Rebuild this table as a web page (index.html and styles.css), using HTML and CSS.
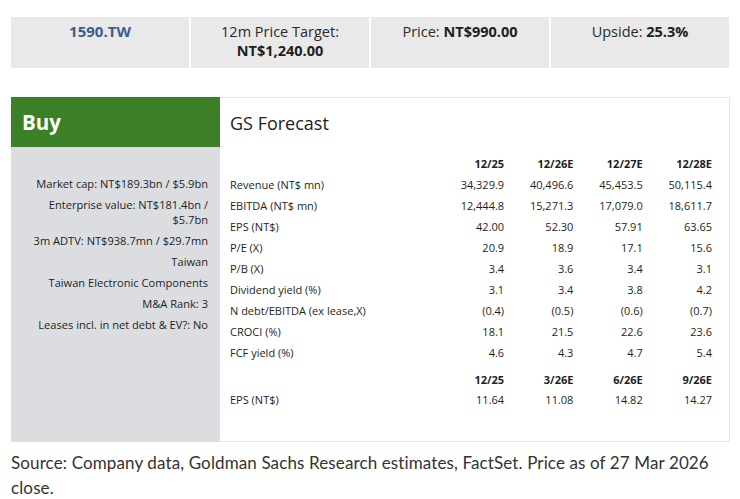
FILE: index.html
```html
<!DOCTYPE html>
<html lang="en">
<head>
<meta charset="utf-8">
<title>1590.TW – GS Forecast</title>
<link rel="stylesheet" href="styles.css">
</head>
<body>
<div class="page">
  <div class="summary">
    <div class="cell ticker">1590.TW</div>
    <div class="cell">12m Price Target:<br><b>NT$1,240.00</b></div>
    <div class="cell">Price: <b>NT$990.00</b></div>
    <div class="cell">Upside: <b>25.3%</b></div>
  </div>

  <div class="card">
    <aside class="side">
      <div class="rating">Buy</div>
      <ul class="facts">
        <li>Market cap: NT$189.3bn / $5.9bn</li>
        <li>Enterprise value: NT$181.4bn / $5.7bn</li>
        <li>3m ADTV: NT$938.7mn / $29.7mn</li>
        <li>Taiwan</li>
        <li>Taiwan Electronic Components</li>
        <li>M&amp;A Rank: 3</li>
        <li>Leases incl. in net debt &amp; EV?: No</li>
      </ul>
    </aside>
    <section class="forecast">
      <h2 class="title">GS Forecast</h2>
      <table class="numbers">
        <colgroup>
          <col>
          <col class="num-col"><col class="num-col"><col class="num-col"><col class="num-col">
        </colgroup>
        <tr class="head"><td></td><td>12/25</td><td>12/26E</td><td>12/27E</td><td>12/28E</td></tr>
        <tr><td>Revenue (NT$ mn)</td><td>34,329.9</td><td>40,496.6</td><td>45,453.5</td><td>50,115.4</td></tr>
        <tr><td>EBITDA (NT$ mn)</td><td>12,444.8</td><td>15,271.3</td><td>17,079.0</td><td>18,611.7</td></tr>
        <tr><td>EPS (NT$)</td><td>42.00</td><td>52.30</td><td>57.91</td><td>63.65</td></tr>
        <tr><td>P/E (X)</td><td>20.9</td><td>18.9</td><td>17.1</td><td>15.6</td></tr>
        <tr><td>P/B (X)</td><td>3.4</td><td>3.6</td><td>3.4</td><td>3.1</td></tr>
        <tr><td>Dividend yield (%)</td><td>3.1</td><td>3.4</td><td>3.8</td><td>4.2</td></tr>
        <tr><td>N debt/EBITDA (ex lease,X)</td><td>(0.4)</td><td>(0.5)</td><td>(0.6)</td><td>(0.7)</td></tr>
        <tr><td>CROCI (%)</td><td>18.1</td><td>21.5</td><td>22.6</td><td>23.6</td></tr>
        <tr><td>FCF yield (%)</td><td>4.6</td><td>4.3</td><td>4.7</td><td>5.4</td></tr>
        <tr class="head second"><td></td><td>12/25</td><td>3/26E</td><td>6/26E</td><td>9/26E</td></tr>
        <tr><td>EPS (NT$)</td><td>11.64</td><td>11.08</td><td>14.82</td><td>14.27</td></tr>
      </table>
    </section>
  </div>

  <p class="source">Source: Company data, Goldman Sachs Research estimates, FactSet. Price as of 27 Mar 2026 close.</p>
</div>
</body>
</html>
```

FILE: styles.css
```css
html, body {
  margin: 0;
  padding: 0;
  background: #ffffff;
}

body {
  font-family: "Open Sans", "Liberation Sans", sans-serif;
  color: #1e1e1e;
}

.page {
  width: 719px;
  padding: 17px 0 0 11px;
}

.summary {
  display: grid;
  grid-template-columns: repeat(4, 1fr);
  gap: 2px;
  width: 718px;
}

.cell {
  background: #e9e9e9;
  height: 51px;
  box-sizing: border-box;
  padding-top: 5px;
  text-align: center;
  font-size: 14.5px;
  line-height: 19px;
  color: #2a2a2a;
}

.cell b {
  font-weight: 700;
  color: #1e1e1e;
}

.ticker {
  font-size: 15px;
  font-weight: 700;
  color: #3c5d90;
}

.card {
  margin-top: 29px;
  display: grid;
  grid-template-columns: 209px 1fr;
}

.side {
  background: #dcdde1;
  display: flex;
  flex-direction: column;
}

.rating {
  background: #3b7f27;
  color: #ffffff;
  height: 50px;
  box-sizing: border-box;
  padding-left: 11px;
  display: flex;
  align-items: center;
  font-size: 20.5px;
  font-weight: 700;
  padding-bottom: 1px;
}

.facts {
  list-style: none;
  margin: 0;
  padding: 26px 12px 0 10px;
  text-align: right;
  font-size: 11.1px;
  line-height: 15px;
}

.facts li {
  padding: 3px 0;
}

.forecast {
  border: 1px solid #e6e6e6;
  border-left: none;
  padding: 0 17px 31px 10px;
}

.title {
  margin: 13px 0 0 0;
  font-size: 18px;
  line-height: 24px;
  font-weight: 400;
  color: #222222;
}

.numbers {
  width: 100%;
  margin-top: 18px;
  border-collapse: collapse;
  table-layout: fixed;
  font-size: 11px;
  line-height: 15px;
}

.num-col {
  width: 69.3px;
}

.numbers td {
  padding: 3px 0;
  white-space: nowrap;
}

.numbers td + td {
  text-align: right;
}

.numbers .head td {
  font-weight: 700;
}

.numbers .second td {
  padding-top: 9px;
  padding-bottom: 2px;
}

.source {
  margin: 8px 0 0 0;
  font-family: Lato, "Open Sans", sans-serif;
  font-size: 17px;
  line-height: 25px;
  letter-spacing: 0.12px;
  color: #333333;
}
```
